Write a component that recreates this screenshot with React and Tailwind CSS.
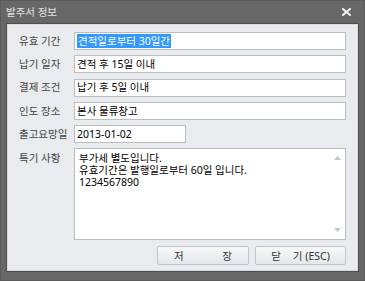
import React from "react";

const font = { fontFamily: '"Noto Sans", "Noto Sans CJK KR", sans-serif' };

function Row({ label, children }) {
  return (
    <div className="flex items-center h-[18px]">
      <div className="w-[56px] text-[10.5px] text-[#444] leading-none pl-[1px] whitespace-nowrap">{label}</div>
      {children}
    </div>
  );
}

function Field({ children, className = "" }) {
  return (
    <div className={"h-[18px] bg-white border border-[#b9bdc5] flex items-center px-[2px] text-[10.5px] text-black leading-none whitespace-nowrap " + className}>
      {children}
    </div>
  );
}

export default function App() {
  return (
    <div style={font} className="w-[365px] h-[281px] bg-[#676767] flex flex-col border border-[#5a5a5a]">
      <div className="h-[22px] flex items-center justify-between pl-[5px] pr-[13px] shrink-0">
        <span className="text-[10.5px] text-[#e4e4e4] leading-none">발주서 정보</span>
        <svg width="9" height="8" viewBox="0 0 9 8">
          <path d="M1 1 L8 7 M8 1 L1 7" stroke="#f2f2f2" strokeWidth="2" strokeLinecap="square" />
        </svg>
      </div>
      <div className="mx-[5px] mb-[8px] flex-1 border border-[#4e4e4e] bg-[#d8dadd] p-[1px] flex">
        <div className="flex-1 bg-[#e9ebef] pt-[7px] pl-[10px] pr-[11px] flex flex-col gap-[5.3px]">
          <Row label="유효 기간">
            <Field className="flex-1">
              <span className="bg-[#3399ff] text-white px-[1px] h-[14px] flex items-center">견적일로부터 30일간</span>
            </Field>
          </Row>
          <Row label="납기 일자">
            <Field className="flex-1">견적 후 15일 이내</Field>
          </Row>
          <Row label="결제 조건">
            <Field className="flex-1">납기 후 5일 이내</Field>
          </Row>
          <Row label="인도 장소">
            <Field className="flex-1">본사 물류창고</Field>
          </Row>
          <Row label="출고요망일">
            <Field className="w-[112px]">2013-01-02</Field>
          </Row>
          <div className="flex">
            <div className="w-[56px] text-[10.5px] text-[#444] leading-none pl-[1px] pt-[5px] whitespace-nowrap">특기 사항</div>
            <div className="flex-1 h-[92px] bg-white border border-[#b9bdc5] flex">
              <div className="flex-1 pl-[4px] pt-[3px] text-[10.5px] text-black leading-[12px] whitespace-nowrap">
                <div>부가세 별도입니다.</div>
                <div>유효기간은 발행일로부터 60일 입니다.</div>
                <div>1234567890</div>
              </div>
              <div className="w-[16px] flex flex-col items-center justify-between pt-[7px] pb-[7px]">
                <svg width="7" height="4" viewBox="0 0 7 4"><path d="M0 4 L3.5 0 L7 4 Z" fill="#c4c6ca" /></svg>
                <svg width="7" height="4" viewBox="0 0 7 4"><path d="M0 0 L3.5 4 L7 0 Z" fill="#c4c6ca" /></svg>
              </div>
            </div>
          </div>
          <div className="flex justify-end gap-[6px] mt-[0.7px]">
            <button className="w-[92px] h-[19px] rounded-[2px] border border-[#bfc3ca] bg-gradient-to-b from-[#f7f8f9] to-[#e4e6ea] text-[10.5px] text-[#333] leading-none flex items-center justify-between px-[16px]">
              <span>저</span><span>장</span>
            </button>
            <button className="w-[91px] h-[19px] rounded-[2px] border border-[#bfc3ca] bg-gradient-to-b from-[#f7f8f9] to-[#e4e6ea] text-[10.5px] text-[#333] leading-none flex items-center justify-center">
              <span>닫</span><span className="ml-[12px]">기 (ESC)</span>
            </button>
          </div>
        </div>
      </div>
    </div>
  );
}
